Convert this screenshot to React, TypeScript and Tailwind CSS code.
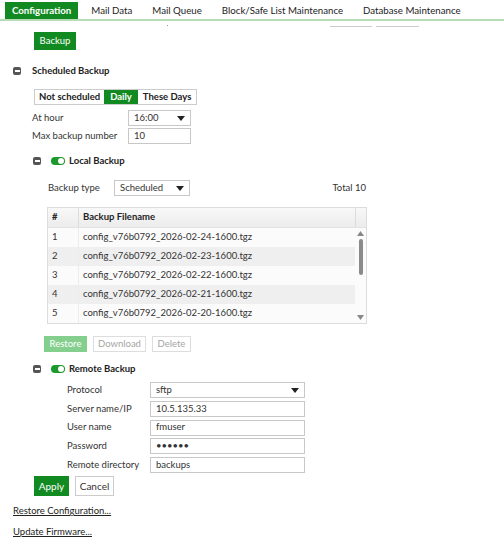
import React from "react";

const GREEN = "bg-[#128a22]";

function Collapse() {
  return (
    <span className="w-[8px] h-[8px] rounded-[2px] bg-[#555] flex items-center justify-center">
      <span className="w-[5px] h-[1.5px] bg-white" />
    </span>
  );
}

function Toggle() {
  return (
    <span className="w-[14px] h-[8px] rounded-full bg-[#1a9a2a] flex items-center justify-end pr-[1px]">
      <span className="w-[6px] h-[6px] rounded-full bg-white" />
    </span>
  );
}

function Caret() {
  return (
    <svg width="8" height="5" viewBox="0 0 8 5" className="shrink-0">
      <path d="M0 0 H8 L4 5 Z" fill="#222" />
    </svg>
  );
}

function SelectBox({ value, w }: { value: string; w: string }) {
  return (
    <div className={`${w} h-[16px] border border-[#c8c8c8] flex items-center justify-between pl-[5px] pr-[5px]`}>
      <span>{value}</span>
      <Caret />
    </div>
  );
}

function InputBox({ value, w }: { value: string; w: string }) {
  return (
    <div className={`${w} h-[16px] border border-[#c8c8c8] flex items-center pl-[5px]`}>
      <span>{value}</span>
    </div>
  );
}

const files = [
  "config_v76b0792_2026-02-24-1600.tgz",
  "config_v76b0792_2026-02-23-1600.tgz",
  "config_v76b0792_2026-02-22-1600.tgz",
  "config_v76b0792_2026-02-21-1600.tgz",
  "config_v76b0792_2026-02-20-1600.tgz",
];

const remote = [
  { label: "Protocol", value: "sftp", select: true },
  { label: "Server name/IP", value: "10.5.135.33" },
  { label: "User name", value: "fmuser" },
  { label: "Password", value: "••••••" },
  { label: "Remote directory", value: "backups" },
];

export default function App() {
  return (
    <div className="w-[504px] h-[542px] bg-white text-[#333] text-[9.5px] font-['Lato','Liberation_Sans',sans-serif] overflow-hidden">
      {/* tabs */}
      <div className="h-[21px] pt-[2px] border-b-2 border-[#b5dcb5] flex pl-[5px] gap-[6px] text-[9.7px]">
        <div className={`${GREEN} text-white font-bold px-[7px] h-[17px] flex items-center`}>Configuration</div>
        {["Mail Data", "Mail Queue", "Block/Safe List Maintenance", "Database Maintenance"].map((t) => (
          <div key={t} className="px-[7px] h-[17px] flex items-center text-[#222]">{t}</div>
        ))}
      </div>
      <div className="h-[11px] flex items-start">
        <span className="ml-[167px] mt-[4px] w-[1px] h-[1px] bg-[#999]" />
        <span className="ml-[162px] mt-[5px] w-[42px] h-[1px] bg-[#ccc]" />
        <span className="ml-[4px] mt-[5px] w-[43px] h-[1px] bg-[#ccc]" />
      </div>

      <div className={`ml-[34px] w-[42px] h-[18px] ${GREEN} text-white flex items-center justify-center`}>Backup</div>

      <div className="mt-[13px] h-[16px] flex items-center ml-[13px] gap-[11px]">
        <Collapse />
        <span className="font-bold text-[#222]">Scheduled Backup</span>
      </div>

      <div className="mt-[10px] ml-[34px] h-[16px] w-fit flex border border-[#ccc] font-bold text-[#222]">
        <div className="px-[4px] flex items-center">Not scheduled</div>
        <div className={`px-[6px] flex items-center ${GREEN} text-white`}>Daily</div>
        <div className="px-[5px] flex items-center">These Days</div>
      </div>

      <div className="mt-[5px] ml-[32px] flex flex-col gap-[2px]">
        <div className="flex items-center">
          <span className="w-[96px]">At hour</span>
          <SelectBox value="16:00" w="w-[63px]" />
        </div>
        <div className="flex items-center">
          <span className="w-[96px]">Max backup number</span>
          <InputBox value="10" w="w-[63px]" />
        </div>
      </div>

      <div className="mt-[9px] h-[16px] ml-[33px] flex items-center">
        <Collapse />
        <span className="ml-[10px]"><Toggle /></span>
        <span className="ml-[4px] font-bold text-[#222]">Local Backup</span>
      </div>

      <div className="mt-[11px] ml-[48px] w-[318px] flex items-center">
        <span className="w-[66px]">Backup type</span>
        <SelectBox value="Scheduled" w="w-[76px]" />
        <span className="ml-auto">Total 10</span>
      </div>

      {/* table */}
      <div className="mt-[11px] ml-[47px] w-[320px] border border-[#dcdcdc] flex flex-col">
        <div className="h-[20px] flex font-bold text-[#222] bg-gradient-to-b from-[#f8f8f8] to-[#ececec] border-b border-[#e2e2e2]">
          <div className="w-[31px] pl-[4px] flex items-center border-r border-[#dcdcdc]">#</div>
          <div className="flex-1 pl-[4px] flex items-center">Backup Filename</div>
          <div className="w-[11px] border-l border-[#dcdcdc]" />
        </div>
        <div className="flex">
          <div className="flex-1 flex flex-col">
            {files.map((f, i) => (
              <div key={f} className={`h-[19px] flex items-center ${i % 2 === 1 ? "bg-[#efefef]" : "bg-[#fbfbfb]"}`}>
                <div className="w-[31px] pl-[4px] h-full flex items-center border-r border-[#ececec]">{i + 1}</div>
                <div className="pl-[4px]">{f}</div>
              </div>
            ))}
          </div>
          <div className="w-[11px] bg-[#fbfbfb] flex flex-col items-center pt-[3px] pb-[3px]">
            <svg width="7" height="5" viewBox="0 0 7 5" className="shrink-0"><path d="M0 5 L3.5 0 L7 5 Z" fill="#888" /></svg>
            <span className="shrink-0 mt-[3px] w-[4px] h-[36px] rounded-full bg-[#8a8a8a]" />
            <span className="flex-1" />
            <svg width="7" height="5" viewBox="0 0 7 5" className="shrink-0"><path d="M0 0 H7 L3.5 5 Z" fill="#888" /></svg>
          </div>
        </div>
      </div>

      <div className="mt-[12px] ml-[44px] flex gap-[6px] h-[16px]">
        <div className="w-[43px] bg-[#84cf8e] text-white flex items-center justify-center">Restore</div>
        <div className="w-[53px] border border-[#ddd] text-[#a5a5a5] flex items-center justify-center">Download</div>
        <div className="w-[39px] border border-[#ddd] text-[#a5a5a5] flex items-center justify-center">Delete</div>
      </div>

      <div className="mt-[9px] h-[16px] ml-[33px] flex items-center">
        <Collapse />
        <span className="ml-[10px]"><Toggle /></span>
        <span className="ml-[4px] font-bold text-[#222]">Remote Backup</span>
      </div>

      <div className="mt-[5px] ml-[67px] flex flex-col gap-[2.8px]">
        {remote.map((r) =>
          <div key={r.label} className="flex items-center">
            <span className="w-[83px]">{r.label}</span>
            {r.select ? <SelectBox value={r.value} w="w-[155px]" /> : <InputBox value={r.value} w="w-[155px]" />}
          </div>
        )}
      </div>

      <div className="mt-[3px] ml-[34px] flex gap-[6px] h-[20px] text-[10px]">
        <div className={`w-[35px] ${GREEN} text-white flex items-center justify-center`}>Apply</div>
        <div className="w-[39px] border border-[#ccc] flex items-center justify-center">Cancel</div>
      </div>

      <div className="mt-[8px] ml-[13px] h-[14px] flex items-center underline text-[#222]">Restore Configuration...</div>
      <div className="mt-[7px] ml-[13px] h-[14px] flex items-center underline text-[#222]">Update Firmware...</div>
    </div>
  );
}
